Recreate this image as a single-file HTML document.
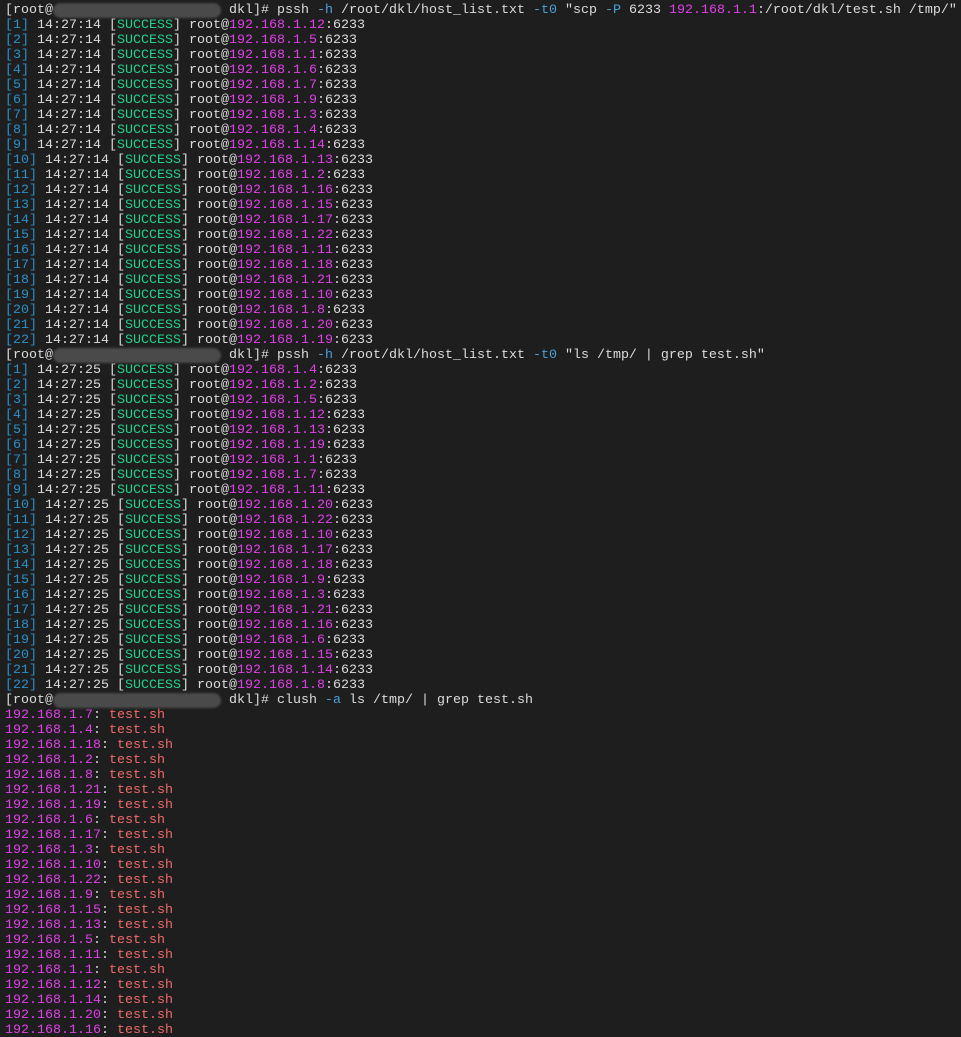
<!DOCTYPE html>
<html><head><meta charset="utf-8"><style>
html,body{margin:0;padding:0;background:#1e1e1e;width:961px;height:1037px;overflow:hidden}
pre{margin:0;padding:3px 0 0 5px;font-family:"Liberation Mono",monospace;font-size:13.33px;line-height:15px;color:#dcdcdc;white-space:pre}
.b{color:#2b90c8}.g{color:#23d18b}.m{color:#e040e8}.o{color:#4aa0d8}.r{color:#f06a6a}
.x{display:inline-block;width:168px;height:15px;vertical-align:top;background:#4a4a4a;border-radius:8px;filter:blur(1px)}
</style></head><body><pre>[root@<span class="x"></span> dkl]# pssh <span class="o">-h</span> /root/dkl/host_list.txt <span class="o">-t0</span> "scp <span class="o">-P</span> 6233 <span class="m">192.168.1.1</span>:/root/dkl/test.sh /tmp/"
<span class="b">[1]</span> 14:27:14 [<span class="g">SUCCESS</span>] root@<span class="m">192.168.1.12</span>:6233
<span class="b">[2]</span> 14:27:14 [<span class="g">SUCCESS</span>] root@<span class="m">192.168.1.5</span>:6233
<span class="b">[3]</span> 14:27:14 [<span class="g">SUCCESS</span>] root@<span class="m">192.168.1.1</span>:6233
<span class="b">[4]</span> 14:27:14 [<span class="g">SUCCESS</span>] root@<span class="m">192.168.1.6</span>:6233
<span class="b">[5]</span> 14:27:14 [<span class="g">SUCCESS</span>] root@<span class="m">192.168.1.7</span>:6233
<span class="b">[6]</span> 14:27:14 [<span class="g">SUCCESS</span>] root@<span class="m">192.168.1.9</span>:6233
<span class="b">[7]</span> 14:27:14 [<span class="g">SUCCESS</span>] root@<span class="m">192.168.1.3</span>:6233
<span class="b">[8]</span> 14:27:14 [<span class="g">SUCCESS</span>] root@<span class="m">192.168.1.4</span>:6233
<span class="b">[9]</span> 14:27:14 [<span class="g">SUCCESS</span>] root@<span class="m">192.168.1.14</span>:6233
<span class="b">[10]</span> 14:27:14 [<span class="g">SUCCESS</span>] root@<span class="m">192.168.1.13</span>:6233
<span class="b">[11]</span> 14:27:14 [<span class="g">SUCCESS</span>] root@<span class="m">192.168.1.2</span>:6233
<span class="b">[12]</span> 14:27:14 [<span class="g">SUCCESS</span>] root@<span class="m">192.168.1.16</span>:6233
<span class="b">[13]</span> 14:27:14 [<span class="g">SUCCESS</span>] root@<span class="m">192.168.1.15</span>:6233
<span class="b">[14]</span> 14:27:14 [<span class="g">SUCCESS</span>] root@<span class="m">192.168.1.17</span>:6233
<span class="b">[15]</span> 14:27:14 [<span class="g">SUCCESS</span>] root@<span class="m">192.168.1.22</span>:6233
<span class="b">[16]</span> 14:27:14 [<span class="g">SUCCESS</span>] root@<span class="m">192.168.1.11</span>:6233
<span class="b">[17]</span> 14:27:14 [<span class="g">SUCCESS</span>] root@<span class="m">192.168.1.18</span>:6233
<span class="b">[18]</span> 14:27:14 [<span class="g">SUCCESS</span>] root@<span class="m">192.168.1.21</span>:6233
<span class="b">[19]</span> 14:27:14 [<span class="g">SUCCESS</span>] root@<span class="m">192.168.1.10</span>:6233
<span class="b">[20]</span> 14:27:14 [<span class="g">SUCCESS</span>] root@<span class="m">192.168.1.8</span>:6233
<span class="b">[21]</span> 14:27:14 [<span class="g">SUCCESS</span>] root@<span class="m">192.168.1.20</span>:6233
<span class="b">[22]</span> 14:27:14 [<span class="g">SUCCESS</span>] root@<span class="m">192.168.1.19</span>:6233
[root@<span class="x"></span> dkl]# pssh <span class="o">-h</span> /root/dkl/host_list.txt <span class="o">-t0</span> "ls /tmp/ | grep test.sh"
<span class="b">[1]</span> 14:27:25 [<span class="g">SUCCESS</span>] root@<span class="m">192.168.1.4</span>:6233
<span class="b">[2]</span> 14:27:25 [<span class="g">SUCCESS</span>] root@<span class="m">192.168.1.2</span>:6233
<span class="b">[3]</span> 14:27:25 [<span class="g">SUCCESS</span>] root@<span class="m">192.168.1.5</span>:6233
<span class="b">[4]</span> 14:27:25 [<span class="g">SUCCESS</span>] root@<span class="m">192.168.1.12</span>:6233
<span class="b">[5]</span> 14:27:25 [<span class="g">SUCCESS</span>] root@<span class="m">192.168.1.13</span>:6233
<span class="b">[6]</span> 14:27:25 [<span class="g">SUCCESS</span>] root@<span class="m">192.168.1.19</span>:6233
<span class="b">[7]</span> 14:27:25 [<span class="g">SUCCESS</span>] root@<span class="m">192.168.1.1</span>:6233
<span class="b">[8]</span> 14:27:25 [<span class="g">SUCCESS</span>] root@<span class="m">192.168.1.7</span>:6233
<span class="b">[9]</span> 14:27:25 [<span class="g">SUCCESS</span>] root@<span class="m">192.168.1.11</span>:6233
<span class="b">[10]</span> 14:27:25 [<span class="g">SUCCESS</span>] root@<span class="m">192.168.1.20</span>:6233
<span class="b">[11]</span> 14:27:25 [<span class="g">SUCCESS</span>] root@<span class="m">192.168.1.22</span>:6233
<span class="b">[12]</span> 14:27:25 [<span class="g">SUCCESS</span>] root@<span class="m">192.168.1.10</span>:6233
<span class="b">[13]</span> 14:27:25 [<span class="g">SUCCESS</span>] root@<span class="m">192.168.1.17</span>:6233
<span class="b">[14]</span> 14:27:25 [<span class="g">SUCCESS</span>] root@<span class="m">192.168.1.18</span>:6233
<span class="b">[15]</span> 14:27:25 [<span class="g">SUCCESS</span>] root@<span class="m">192.168.1.9</span>:6233
<span class="b">[16]</span> 14:27:25 [<span class="g">SUCCESS</span>] root@<span class="m">192.168.1.3</span>:6233
<span class="b">[17]</span> 14:27:25 [<span class="g">SUCCESS</span>] root@<span class="m">192.168.1.21</span>:6233
<span class="b">[18]</span> 14:27:25 [<span class="g">SUCCESS</span>] root@<span class="m">192.168.1.16</span>:6233
<span class="b">[19]</span> 14:27:25 [<span class="g">SUCCESS</span>] root@<span class="m">192.168.1.6</span>:6233
<span class="b">[20]</span> 14:27:25 [<span class="g">SUCCESS</span>] root@<span class="m">192.168.1.15</span>:6233
<span class="b">[21]</span> 14:27:25 [<span class="g">SUCCESS</span>] root@<span class="m">192.168.1.14</span>:6233
<span class="b">[22]</span> 14:27:25 [<span class="g">SUCCESS</span>] root@<span class="m">192.168.1.8</span>:6233
[root@<span class="x"></span> dkl]# clush <span class="o">-a</span> ls /tmp/ | grep test.sh
<span class="m">192.168.1.7</span>: <span class="r">test.sh</span>
<span class="m">192.168.1.4</span>: <span class="r">test.sh</span>
<span class="m">192.168.1.18</span>: <span class="r">test.sh</span>
<span class="m">192.168.1.2</span>: <span class="r">test.sh</span>
<span class="m">192.168.1.8</span>: <span class="r">test.sh</span>
<span class="m">192.168.1.21</span>: <span class="r">test.sh</span>
<span class="m">192.168.1.19</span>: <span class="r">test.sh</span>
<span class="m">192.168.1.6</span>: <span class="r">test.sh</span>
<span class="m">192.168.1.17</span>: <span class="r">test.sh</span>
<span class="m">192.168.1.3</span>: <span class="r">test.sh</span>
<span class="m">192.168.1.10</span>: <span class="r">test.sh</span>
<span class="m">192.168.1.22</span>: <span class="r">test.sh</span>
<span class="m">192.168.1.9</span>: <span class="r">test.sh</span>
<span class="m">192.168.1.15</span>: <span class="r">test.sh</span>
<span class="m">192.168.1.13</span>: <span class="r">test.sh</span>
<span class="m">192.168.1.5</span>: <span class="r">test.sh</span>
<span class="m">192.168.1.11</span>: <span class="r">test.sh</span>
<span class="m">192.168.1.1</span>: <span class="r">test.sh</span>
<span class="m">192.168.1.12</span>: <span class="r">test.sh</span>
<span class="m">192.168.1.14</span>: <span class="r">test.sh</span>
<span class="m">192.168.1.20</span>: <span class="r">test.sh</span>
<span class="m">192.168.1.16</span>: <span class="r">test.sh</span>
</pre></body></html>
